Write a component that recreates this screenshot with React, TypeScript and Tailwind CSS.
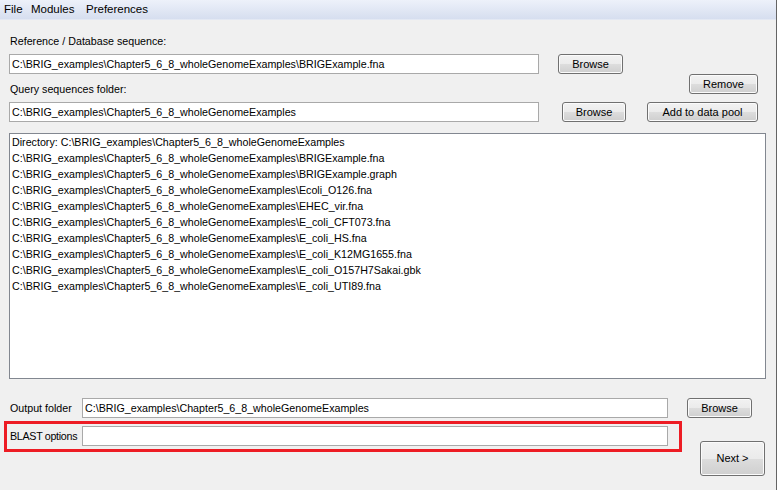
import React from "react";

const btn =
  "flex items-center justify-center rounded-[3px] border border-[#707070] bg-[linear-gradient(to_bottom,#f2f2f2_0%,#ebebeb_50%,#dddddd_50%,#cfcfcf_100%)] shadow-[inset_0_0_0_1px_#fbfbfb] text-black text-[11px] leading-none whitespace-nowrap";
const input =
  "h-[20px] border border-[#a9a9a9] bg-white px-[2px] flex items-center text-[10.7px] text-black whitespace-nowrap overflow-hidden";

const files = [
  "Directory: C:\\BRIG_examples\\Chapter5_6_8_wholeGenomeExamples",
  "C:\\BRIG_examples\\Chapter5_6_8_wholeGenomeExamples\\BRIGExample.fna",
  "C:\\BRIG_examples\\Chapter5_6_8_wholeGenomeExamples\\BRIGExample.graph",
  "C:\\BRIG_examples\\Chapter5_6_8_wholeGenomeExamples\\Ecoli_O126.fna",
  "C:\\BRIG_examples\\Chapter5_6_8_wholeGenomeExamples\\EHEC_vir.fna",
  "C:\\BRIG_examples\\Chapter5_6_8_wholeGenomeExamples\\E_coli_CFT073.fna",
  "C:\\BRIG_examples\\Chapter5_6_8_wholeGenomeExamples\\E_coli_HS.fna",
  "C:\\BRIG_examples\\Chapter5_6_8_wholeGenomeExamples\\E_coli_K12MG1655.fna",
  "C:\\BRIG_examples\\Chapter5_6_8_wholeGenomeExamples\\E_coli_O157H7Sakai.gbk",
  "C:\\BRIG_examples\\Chapter5_6_8_wholeGenomeExamples\\E_coli_UTI89.fna",
];

export default function App() {
  return (
    <div
      className="w-[777px] h-[490px] bg-[#f0f0f0] border-r border-[#646464] text-[10.7px] text-black overflow-hidden"
      style={{ fontFamily: '"Liberation Sans", Arial, sans-serif' }}
    >
      <div className="h-[20px] flex items-center bg-[linear-gradient(to_bottom,#edf1fa,#d6deef)] border-b border-[#e3e8f3] text-[11.5px]">
        <span className="w-[31px] shrink-0 pl-[4px]">File</span>
        <span className="w-[55px] shrink-0">Modules</span>
        <span>Preferences</span>
      </div>
      <div className="pl-[9px] flex flex-col">
        <div className="h-[14px] mt-[14px] ml-[1px] leading-[14px] whitespace-nowrap">Reference / Database sequence:</div>
        <div className="flex mt-[6px] h-[20px]">
          <div className={`${input} w-[530px]`}>C:\BRIG_examples\Chapter5_6_8_wholeGenomeExamples\BRIGExample.fna</div>
          <button className={`${btn} ml-[19px] w-[65px] h-[20px]`}>Browse</button>
        </div>
        <div className="flex h-[28px]">
          <div className="flex-1 ml-[1px] pt-[8px] leading-[14px] whitespace-nowrap">Query sequences folder:</div>
          <button className={`${btn} mr-[18px] w-[69px] h-[20px]`}>Remove</button>
        </div>
        <div className="flex h-[20px]">
          <div className={`${input} w-[530px]`}>C:\BRIG_examples\Chapter5_6_8_wholeGenomeExamples</div>
          <button className={`${btn} ml-[23px] w-[64px] h-[20px]`}>Browse</button>
          <button className={`${btn} ml-[21px] w-[111px] h-[20px]`}>Add to data pool</button>
        </div>
        <div className="mt-[11px] w-[757px] h-[246px] border border-[#828790] bg-white px-[2px] leading-[16px] whitespace-nowrap overflow-hidden">
          {files.map((f) => (
            <div key={f}>{f}</div>
          ))}
        </div>
        <div className="flex mt-[19px] h-[20px] items-center">
          <div className="w-[73px] pl-[1px] whitespace-nowrap">Output folder</div>
          <div className={`${input} w-[586px]`}>C:\BRIG_examples\Chapter5_6_8_wholeGenomeExamples</div>
          <button className={`${btn} ml-[19px] w-[65px] h-[20px]`}>Browse</button>
        </div>
        <div className="flex items-start mt-[3px] -ml-[5px]">
          <div className="flex items-center border-[3px] border-[#ed1c24] pl-[3px] pt-[2px] pb-[3px] pr-[11px]">
            <div className="w-[72px] whitespace-nowrap tracking-[-0.3px]">BLAST options</div>
            <div className={`${input} w-[586px]`}></div>
          </div>
          <button className={`${btn} ml-[18px] mt-[20px] w-[65px] h-[35px]`}>Next &gt;</button>
        </div>
      </div>
    </div>
  );
}
